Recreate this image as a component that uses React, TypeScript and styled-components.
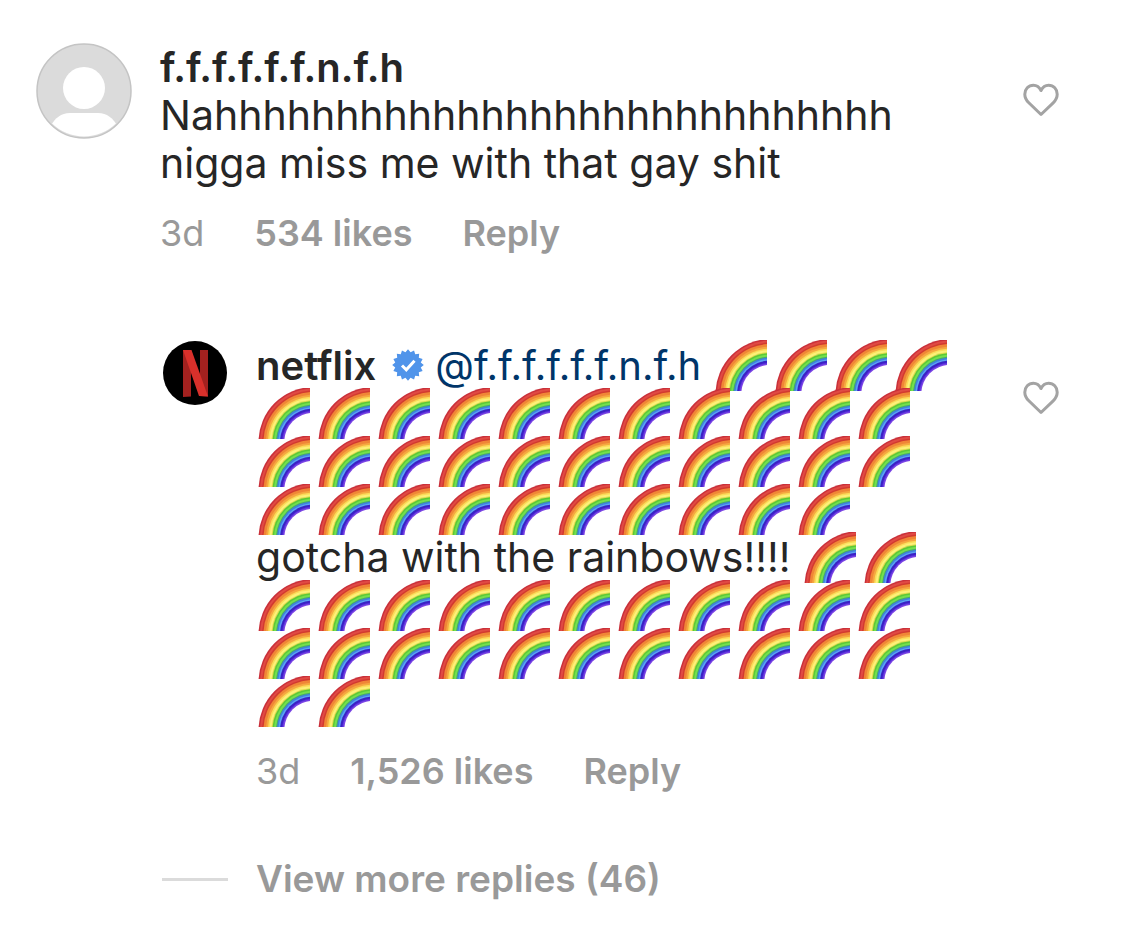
import React from "react";
import styled, { createGlobalStyle } from "styled-components";

const GlobalStyle = createGlobalStyle`
  * { box-sizing: border-box; }
  body { margin: 0; background: #fff; color: #262626; font-family: Inter, "Liberation Sans", sans-serif; }
  button { font: inherit; color: inherit; background: none; border: 0; padding: 0; cursor: pointer; }
  a { color: inherit; text-decoration: none; }
`;

const Thread = styled.main`
  padding: 43px 65px 32px 36px;
`;

const Comment = styled.article<{ $reply?: boolean }>`
  display: flex;
  align-items: flex-start;
  gap: 28px;
  margin: ${(p) => (p.$reply ? "86px 0 0 126px" : "0")};
`;

const Avatar = styled.svg<{ $size: number }>`
  flex: none;
  width: ${(p) => p.$size}px;
  height: ${(p) => p.$size}px;
`;

const Body = styled.div`
  flex: 1;
  min-width: 0;
`;

const Text = styled.p`
  margin: 0;
  font-size: 41px;
  line-height: 48px;
  overflow-wrap: anywhere;
`;

const Username = styled.a`
  font-size: 40px;
  font-weight: 600;
  line-height: 1;
`;

const Mention = styled.a`
  && { color: #003569; }
  font-size: 40px;
  line-height: 1;
`;

const Badge = styled.svg`
  width: 32px;
  height: 32px;
  margin: -4px 0 0 4px;
  vertical-align: -1px;
`;

const Meta = styled.div`
  display: flex;
  gap: 50px;
  margin-top: 24px;
  font-size: 36px;
  line-height: 44px;
  color: #999;
`;

const MetaButton = styled.button`
  && { font-weight: 600; }
`;

const LikeButton = styled.button`
  flex: none;
  display: flex;
  margin: 40px 0 0 36px;
`;

const Heart = styled.svg`
  width: 36px;
  height: 34px;
`;

const RainbowIcon = styled.svg`
  width: 52px;
  height: 51px;
  margin: -14px 6px -4px 2px;
  vertical-align: -7px;
`;

const MoreReplies = styled.div`
  display: flex;
  align-items: center;
  gap: 28px;
  margin: 64px 0 0 126px;
  font-size: 37px;
  line-height: 44px;
  color: #999;
`;

const Rule = styled.span`
  width: 66px;
  height: 3px;
  background: #dbdbdb;
`;

const bands: [number, string][] = [
  [55, "#c9303a"],
  [53.5, "#e04a44"],
  [51.5, "#d23a30"],
  [50, "#f08636"],
  [47.5, "#f5a840"],
  [45.5, "#fbdc58"],
  [44, "#fdf07a"],
  [42, "#dcdc4c"],
  [41, "#5cc838"],
  [39.5, "#74e04c"],
  [37.5, "#46a86c"],
  [36.5, "#3f80e0"],
  [35, "#5aa4f4"],
  [33.5, "#3a22c4"],
  [31.5, "#5a30dc"],
  [30.5, "#7a44e4"],
];

const Rainbow = () => (
  <RainbowIcon viewBox="0 0 52 51" role="img" aria-label="rainbow">
    {bands.map(([r, color]) => (
      <circle key={r} cx="55.500" cy="54" r={r} fill={color} />
    ))}
    <circle cx="55.500" cy="54" r="29.200" fill="#fff" />
  </RainbowIcon>
);

const Rainbows = ({ count }: { count: number }) => (
  <>
    {Array.from({ length: count }, (_, i) => (
      <Rainbow key={i} />
    ))}
  </>
);

const Like = () => (
  <LikeButton type="button" aria-label="Like">
    <Heart viewBox="0 0 36 34" fill="none" stroke="#a3a3a3" strokeWidth="3" strokeLinejoin="round">
      <path d="M18 7.500C16.400 4.200 13.600 2.200 10.400 2.200C5.500 2.200 1.800 6.200 1.800 11.200C1.800 14.600 3.200 17.200 5.800 19.800L18 31.500L30.200 19.800C32.800 17.200 34.200 14.600 34.200 11.200C34.200 6.200 30.500 2.200 25.600 2.200C22.400 2.200 19.600 4.200 18 7.500Z" />
    </Heart>
  </LikeButton>
);

const badgePoints = Array.from({ length: 32 }, (_, i) => {
  const r = i % 2 ? 13 : 15.8;
  const a = (i * Math.PI) / 16 - Math.PI / 2;
  return `${(16 + r * Math.cos(a)).toFixed(2)},${(16 + r * Math.sin(a)).toFixed(2)}`;
}).join(" ");

export default function App() {
  return (
    <>
      <GlobalStyle />
      <Thread>
        <Comment>
          <Avatar $size={96} viewBox="0 0 96 96" role="img" aria-label="Profile picture">
            <defs>
              <clipPath id="person">
                <circle cx="48" cy="48" r="45.500" />
              </clipPath>
            </defs>
            <circle cx="48" cy="48" r="47" fill="#dbdbdb" stroke="#c4c4c4" strokeWidth="1.5" />
            <circle cx="48" cy="45" r="21" fill="#fff" />
            <path clipPath="url(#person)" d="M14 84C19 75 25 70 34 70H62C71 70 77 75 82 84V96H14Z" fill="#fff" />
          </Avatar>
          <Body>
            <Text>
              <Username href="#user">f.f.f.f.f.f.n.f.h</Username>
              <br />
              Nahhhhhhhhhhhhhhhhhhhhhhhhhhhh
              <br />
              nigga miss me with that gay shit
            </Text>
            <Meta>
              <span>3d</span>
              <MetaButton type="button">534 likes</MetaButton>
              <MetaButton type="button">Reply</MetaButton>
            </Meta>
          </Body>
          <Like />
        </Comment>

        <Comment $reply>
          <Avatar $size={66} viewBox="0 0 66 66" role="img" aria-label="netflix">
            <circle cx="33" cy="32" r="32" fill="#000" />
            <path d="M21 9H29V55.500L21 56Z" fill="#a3211f" />
            <path d="M38 9H46V55.500L38 55Z" fill="#a3211f" />
            <path d="M21 9H29.500L46 55.500L37 55Z" fill="#d8302b" />
          </Avatar>
          <Body>
            <Text>
              <Username href="#netflix">netflix</Username>{" "}
              <Badge viewBox="0 0 32 32" role="img" aria-label="Verified">
                <polygon points={badgePoints} fill="#5094ea" />
                <path d="M10 16.500L14.300 20.800L22.500 11.800" fill="none" stroke="#fff" strokeWidth="3" />
              </Badge>{" "}
              <Mention href="#user">@f.f.f.f.f.f.n.f.h</Mention> <Rainbows count={36} />
              gotcha with the rainbows!!!! <Rainbows count={26} />
            </Text>
            <Meta>
              <span>3d</span>
              <MetaButton type="button">1,526 likes</MetaButton>
              <MetaButton type="button">Reply</MetaButton>
            </Meta>
          </Body>
          <Like />
        </Comment>

        <MoreReplies>
          <Rule />
          <MetaButton type="button">View more replies (46)</MetaButton>
        </MoreReplies>
      </Thread>
    </>
  );
}
